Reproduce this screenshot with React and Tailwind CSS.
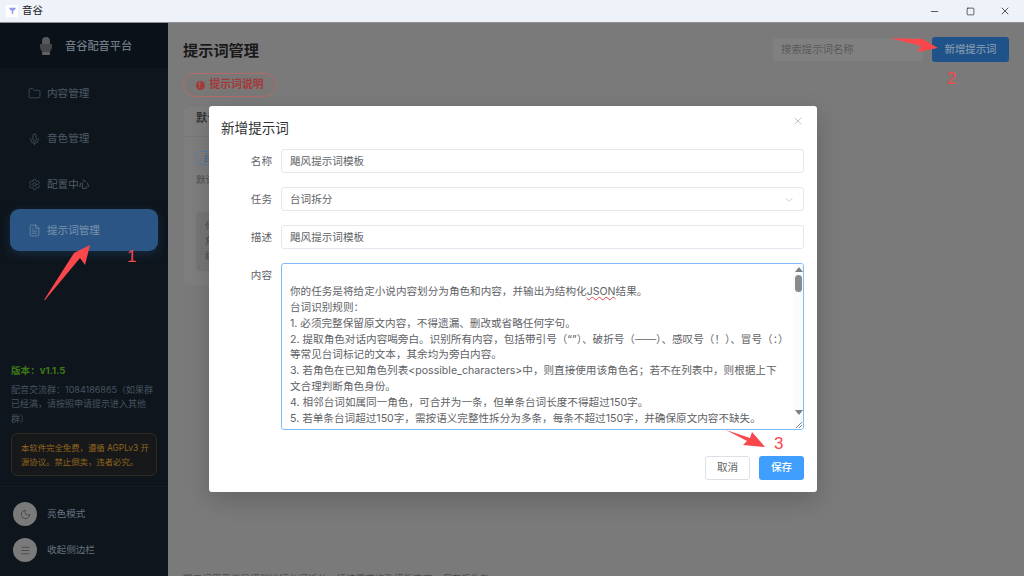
import { Folder, Mic, Settings, FileText, Moon, Menu, Minus, Square, X, ChevronDown } from "lucide-react";

const FONT = "font-['Inter','Noto_Sans_CJK_SC',sans-serif]";

const NAV = [
  { label: "内容管理", icon: Folder },
  { label: "音色管理", icon: Mic },
  { label: "配置中心", icon: Settings },
  { label: "提示词管理", icon: FileText, active: true },
];

const PROMPT_LINES = [
  "",
  <>你的任务是将给定小说内容划分为角色和内容，并输出为结构化<span className="underline decoration-wavy decoration-[#e5484d] decoration-1">JSON</span>结果。</>,
  "台词识别规则：",
  "1. 必须完整保留原文内容，不得遗漏、删改或省略任何字句。",
  "2. 提取角色对话内容喝旁白。识别所有内容，包括带引号（“”）、破折号（——）、感叹号（！）、冒号（：）",
  "等常见台词标记的文本，其余均为旁白内容。",
  "3. 若角色在已知角色列表<possible_characters>中，则直接使用该角色名；若不在列表中，则根据上下",
  "文合理判断角色身份。",
  "4. 相邻台词如属同一角色，可合并为一条，但单条台词长度不得超过150字。",
  "5. 若单条台词超过150字，需按语义完整性拆分为多条，每条不超过150字，并确保原文内容不缺失。",
];

function FormRow({ label, className = "", children }) {
  return (
    <div className={`flex ${className}`}>
      <label className="h-[24px] w-[60px] shrink-0 pr-[9px] text-right text-[10.6px] leading-[26px] text-[#606266]">{label}</label>
      <div className="min-w-0 flex-1">{children}</div>
    </div>
  );
}

function TextBox({ children }) {
  return (
    <div className="flex h-[24px] items-center justify-between rounded-[3px] border border-[#e4e7ed] px-[8px] pt-[1px] text-[10.6px] text-[#606266]">
      {children}
    </div>
  );
}

function Arrow({ points, className }) {
  return (
    <svg className={`pointer-events-none absolute ${className}`} viewBox="0 0 60 60">
      <polygon points={points} fill="#f9474c" />
    </svg>
  );
}

export default function App() {
  return (
    <div className={`relative flex h-screen w-full flex-col overflow-hidden bg-[#7a7a7a] ${FONT}`}>
      {/* title bar */}
      <div className="flex h-[23px] shrink-0 items-center justify-between border-b border-[#8f9093] bg-[#eef2f9] pl-[6px]">
        <div className="flex items-center gap-[4px]">
          <div className="flex h-[12px] w-[12px] items-center justify-center bg-white">
            <svg width="9" height="9" viewBox="0 0 10 10">
              <path d="M1 2h8L7 5H5.8v4H4.2V5H3z" fill="#8f9be8" />
            </svg>
          </div>
          <span className="text-[10.4px] text-[#222]">音谷</span>
        </div>
        <div className="flex items-center text-[#222]">
          <div className="flex w-[36px] justify-center"><Minus size={11} strokeWidth={1.6} /></div>
          <div className="flex w-[36px] justify-center"><Square size={9} strokeWidth={1.8} /></div>
          <div className="flex w-[36px] justify-center pr-[2px]"><X size={12} strokeWidth={1.5} /></div>
        </div>
      </div>

      <div className="flex min-h-0 flex-1">
        {/* sidebar */}
        <aside className="flex w-[168px] shrink-0 flex-col bg-[#0e151d]">
          <div className="flex h-[45px] items-center gap-[12px] bg-[#0b1118] pl-[39px] pt-[1px]">
            <svg width="14" height="19" viewBox="0 0 14 19">
              <rect x="3" y="0" width="8" height="12" rx="4" fill="#59595b" />
              <path d="M1 7h12v3a6 6 0 0 1-12 0z" fill="#47474a" />
              <rect x="3" y="15" width="8" height="3" rx="1" fill="#626264" />
            </svg>
            <span className="text-[11.2px] font-medium text-[#6e7a86]">音谷配音平台</span>
          </div>

          <nav className="flex flex-col gap-[3.67px] px-[10px] pt-[4px]">
            {NAV.map(({ label, icon: Icon, active }) => (
              <div
                key={label}
                className={`flex h-[42px] items-center gap-[6px] rounded-[9px] pl-[18px] pt-[1px] text-[10.6px] ${active ? "bg-[#2a5585] text-[#7b93ad] shadow-[0_3px_10px_rgba(42,85,133,0.35)]" : "text-[#4f5a66]"}`}
              >
                <Icon size={13} strokeWidth={1.3} />
                <span>{label}</span>
              </div>
            ))}
          </nav>

          <div className="flex-1" />

          <div className="px-[11px] pb-[10px]">
            <p className="text-[9.6px] font-bold leading-[14px] text-[#3d7a17]">版本：v1.1.5</p>
            <p className="mt-[5px] whitespace-nowrap text-[9px] leading-[14.5px] text-[#47525e]">
              配音交流群：1084186865（如果群<br />已经满，请按照申请提示进入其他<br />群）
            </p>
            <div className="mt-[7px] h-[43px] whitespace-nowrap rounded-[6px] border border-[#2e2a20] bg-[#17181a] px-[9px] py-[7px] text-[8.4px] leading-[14px] text-[#92651c]">
              本软件完全免费，遵循 AGPLv3 开<br />源协议。禁止倒卖，违者必究。
            </div>
          </div>

          <div className="flex flex-col gap-[12px] border-t border-[#131c26] px-[13px] pb-[14px] pt-[15px]">
            {[
              { label: "亮色模式", icon: Moon },
              { label: "收起侧边栏", icon: Menu },
            ].map(({ label, icon: Icon }) => (
              <div key={label} className="flex items-center gap-[10px] text-[9.6px] text-[#66717d]">
                <div className="flex h-[24px] w-[24px] items-center justify-center rounded-full bg-[#7a7a7a] text-[#333]">
                  <Icon size={11} strokeWidth={1.4} />
                </div>
                <span>{label}</span>
              </div>
            ))}
          </div>
        </aside>

        {/* page behind the dialog */}
        <main className="relative min-w-0 flex-1 px-[15px]">
          <div className="flex h-[50px] items-center justify-between pt-[3px]">
            <h1 className="mt-[3px] text-[15.2px] font-bold text-[#191919]">提示词管理</h1>
            <div className="flex items-center gap-[9px]">
              <div className="flex h-[23px] w-[150px] items-center rounded-[3px] bg-[#808080] px-[8px] text-[10.4px] text-[#595959]">搜索提示词名称</div>
              <div className="flex h-[25px] w-[77px] items-center justify-center rounded-[3px] bg-[#1f5288] text-[10.4px] font-medium text-[#7f96ad]">新增提示词</div>
            </div>
          </div>
          <div className="flex h-[24px] w-[93px] items-center justify-center gap-[5px] rounded-full border border-[#b56a6a] bg-[#7a7777] text-[10.8px] font-bold text-[#a33a3a]">
            <span className="flex h-[9px] w-[9px] items-center justify-center rounded-full bg-[#a33a3a] text-[7px] font-bold leading-none text-[#7a7777]">!</span>
            提示词说明
          </div>
          <div className="ml-[1px] mt-[10px] h-[178px] w-[400px] rounded-[6px] bg-[#7e7e7e]">
            <div className="h-[30px] border-b border-[#777] px-[12px] pt-[3px] text-[11.2px] font-bold leading-[16px] text-[#333]">默认模板</div>
            <div className="px-[12px] pt-[14px]">
              <span className="flex h-[14px] w-[40px] items-center rounded-[3px] border border-[#5f7d9f] pl-[6px] text-[9.6px] leading-none text-[#3f6a99]">台词</span>
              <p className="mt-[8px] text-[9.6px] leading-[14px] text-[#4d4d4d]">默认提示词</p>
              <div className="mt-[25px] h-[59px] rounded-[4px] bg-[#767676] px-[9px] py-[6px] text-[9.6px] leading-[15px] text-[#4d4d4d]">
                <p>你的任务</p>
                <p>角色</p>
                <p>结果</p>
              </div>
            </div>
          </div>
          <p className="mt-[288px] text-[9.6px] leading-[12px] text-[#4d4d4d]">提示词用于指导模型进行台词拆分，请按需求修改模板内容，保存后生效。</p>
        </main>
      </div>

      {/* new prompt dialog */}
      <div className="absolute left-[209px] top-[106px] flex h-[386px] w-[608px] flex-col rounded-[3px] bg-white pl-[12px] pr-[13px] shadow-[0_8px_24px_rgba(0,0,0,0.18)]">
        <div className="flex h-[43px] items-center justify-between">
          <span className="pt-[1px] text-[13.6px] text-[#303133]">新增提示词</span>
          <X size={12} strokeWidth={1.1} className="mb-[14px] text-[#909399]" />
        </div>
        <FormRow label="名称">
          <TextBox>飓风提示词模板</TextBox>
        </FormRow>
        <FormRow label="任务" className="mt-[14px]">
          <TextBox>
            <span>台词拆分</span>
            <ChevronDown size={12} strokeWidth={1.2} className="text-[#a8abb2]" />
          </TextBox>
        </FormRow>
        <FormRow label="描述" className="mt-[14px]">
          <TextBox>飓风提示词模板</TextBox>
        </FormRow>
        <FormRow label="内容" className="mt-[14px]">
          <div className="relative h-[167px] overflow-hidden rounded-[3px] border border-[#7fbcf7]">
            <div className="whitespace-nowrap px-[8px] pt-[4px] text-[10.6px] leading-[15.9px] text-[#606266]">
              {PROMPT_LINES.map((line, i) => (
                <div key={i} className="h-[15.9px]">{line}</div>
              ))}
            </div>
            {/* scrollbar sits over the right border */}
            <div className="absolute inset-y-[-1px] right-[-1px] flex w-[11px] flex-col items-center bg-[#fbfbfb] pt-[4px]">
              <div className="h-0 w-0 border-x-[4px] border-b-[5px] border-x-transparent border-b-[#7f7f7f]" />
              <div className="mt-[3px] h-[17px] w-[7px] rounded-full bg-[#8a8a8a]" />
              <div className="flex-1" />
              <div className="mb-[15px] h-0 w-0 border-x-[4px] border-t-[5px] border-x-transparent border-t-[#7f7f7f]" />
              <svg className="absolute bottom-[1px] right-[1px]" width="8" height="8" viewBox="0 0 8 8">
                <path d="M1 7l6-6M4 7l3-3" stroke="#666" strokeWidth="0.8" />
              </svg>
            </div>
          </div>
        </FormRow>
        <div className="mt-[26px] flex justify-end gap-[9px]">
          <div className="flex h-[24px] w-[45px] items-center justify-center rounded-[3px] border border-[#dcdfe6] text-[10.6px] text-[#606266]">取消</div>
          <div className="flex h-[24px] w-[45px] items-center justify-center rounded-[3px] bg-[#409eff] text-[10.6px] font-medium text-white">保存</div>
        </div>
      </div>

      {/* annotations drawn on top of the screenshot */}
      <Arrow className="left-[40px] top-[242px] h-[60px] w-[60px]" points="50,3 45,23 40,16 5,58 4,58 34,11" />
      <span className="absolute left-[127px] top-[244px] text-[17px] leading-[26px] text-[#f9474c] font-['Liberation_Sans',sans-serif]">1</span>
      <Arrow className="left-[888px] top-[20px] h-[60px] w-[60px]" points="2,18 33,19 33,18 50,28 29,32 33,26" />
      <span className="absolute left-[947px] top-[67px] text-[17px] leading-[24px] text-[#f9474c] font-['Liberation_Sans',sans-serif]">2</span>
      <Arrow className="left-[725px] top-[428px] h-[60px] w-[60px]" points="1,2 25,10 27,4 40,19 18,17 22,13" />
      <span className="absolute left-[774px] top-[431px] text-[17px] leading-[26px] text-[#f9474c] font-['Liberation_Sans',sans-serif]">3</span>
    </div>
  );
}
